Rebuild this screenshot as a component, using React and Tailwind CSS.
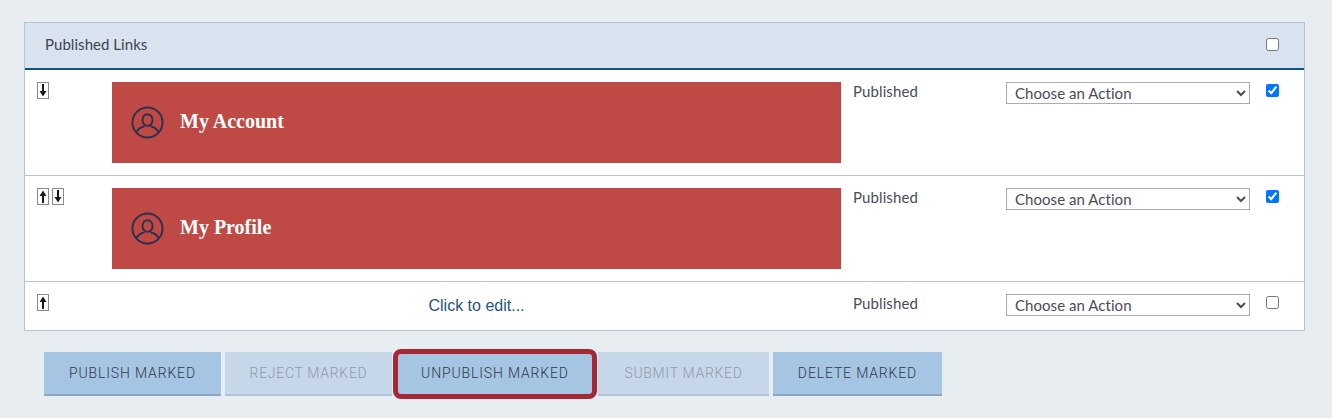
const UserIcon = () => (
  <svg width="33" height="33" viewBox="0 0 34 34" fill="none" stroke="#2c2f52" strokeWidth="2" className="shrink-0">
    <circle cx="17" cy="17" r="15.5" />
    <ellipse cx="17" cy="14.5" rx="5.2" ry="6" />
    <path d="M5.5 27c2-4 5.5-5.6 8.5-6.2M28.500 27c-2-4-5.500-5.600-8.500-6.200" />
  </svg>
)

const Arrow = ({ up }) => (
  <svg width="12" height="17" viewBox="0 0 12 17" className="block">
    <rect x="0.5" y="0.5" width="11" height="16" fill="#fff" stroke="#8a8a8a" />
    {up
      ? <path d="M6 2.500 9.500 8H7v7H5V8H2.500z" fill="#1a1a1a" />
      : <path d="M6 14.500 9.500 9H7V2H5v7H2.500z" fill="#1a1a1a" />}
  </svg>
)

const Status = () => (
  <span className="block -mt-px pl-3 text-[15px] leading-5 text-[#4a4c56] font-['Lato','Open_Sans',sans-serif] tracking-[0.1px]">Published</span>
)

const ActionSelect = () => (
  <select className="block w-[244px] h-[22px] pb-[4px] border border-[#a9adb3] bg-white pl-[4px] text-[15px] text-[#4a4c56] font-['Lato','Open_Sans',sans-serif] tracking-[0.05px] outline-none">
    <option>Choose an Action</option>
  </select>
)

const Row = ({ up, down, title, checked, last }) => (
  <div className={`grid grid-cols-[87px_729px_165px_244px_1fr] ${last ? 'h-[48px] pt-[12px]' : 'h-[106px] pt-[12px] border-b border-[#b4c4d4]'}`}>
    <div className="flex gap-[3px] pl-[12px]">
      {up && <Arrow up />}
      {down && <Arrow />}
    </div>
    {title ? (
      <div className="h-[81px] bg-[#bf4a45] flex items-center gap-[16px] pl-[19px]">
        <UserIcon />
        <span className="text-white font-bold text-[20px] pb-[3px] font-['Liberation_Serif',serif]">{title}</span>
      </div>
    ) : (
      <div className="text-center text-[16px] leading-[22px] pt-[1px] text-[#1f5580] font-['Liberation_Sans',sans-serif]">Click to edit...</div>
    )}
    <Status />
    <ActionSelect />
    <div className="pl-[16px] pt-[2px]">
      <input type="checkbox" defaultChecked={checked} className="block w-[13px] h-[13px] m-0" />
    </div>
  </div>
)

const Btn = ({ children, disabled, marked, w }) => (
  <button
    className={`h-[44px] border-b-2 text-[14px] uppercase font-['Roboto',sans-serif] font-light text-center ${w} ${disabled ? 'tracking-[0.7px] bg-[#c6d7ea] border-[#b3c2d3] text-[#8e9bab]' : 'tracking-[0.85px] bg-[#a6c5e3] border-[#8aa6c4] text-[#2c3a4c]'} ${marked ? 'outline-[5px] -outline-offset-2 outline-[#a52834] rounded-[5px]' : ''}`}
  >
    {children}
  </button>
)

const App = () => {
  return (
    <div className="w-[1332px] h-[418px] overflow-hidden bg-[#e8edf2] pt-[22px] pl-[24px]">
      <div className="w-[1281px] border border-[#b4c4d4] bg-white">
        <div className="h-[47px] bg-[#d9e3f0] border-b-2 border-[#14528a] flex items-center justify-between pl-[20px] pr-[25px] pb-[2px]">
          <span className="text-[15px] text-[#3c4450] font-['Lato','Open_Sans',sans-serif] tracking-[0.05px]">Published Links</span>
          <input type="checkbox" className="block w-[13px] h-[13px] m-0" />
        </div>
        <Row down title="My Account" checked />
        <Row up down title="My Profile" checked />
        <Row up last />
      </div>
      <div className="flex gap-[4px] pl-[20px] mt-[21px]">
        <Btn w="w-[177px]">Publish Marked</Btn>
        <Btn w="w-[167px]" disabled>Reject Marked</Btn>
        <Btn w="w-[198px]" marked>Unpublish Marked</Btn>
        <Btn w="w-[171px]" disabled>Submit Marked</Btn>
        <Btn w="w-[169px]">Delete Marked</Btn>
      </div>
    </div>
  )
}

export default App
